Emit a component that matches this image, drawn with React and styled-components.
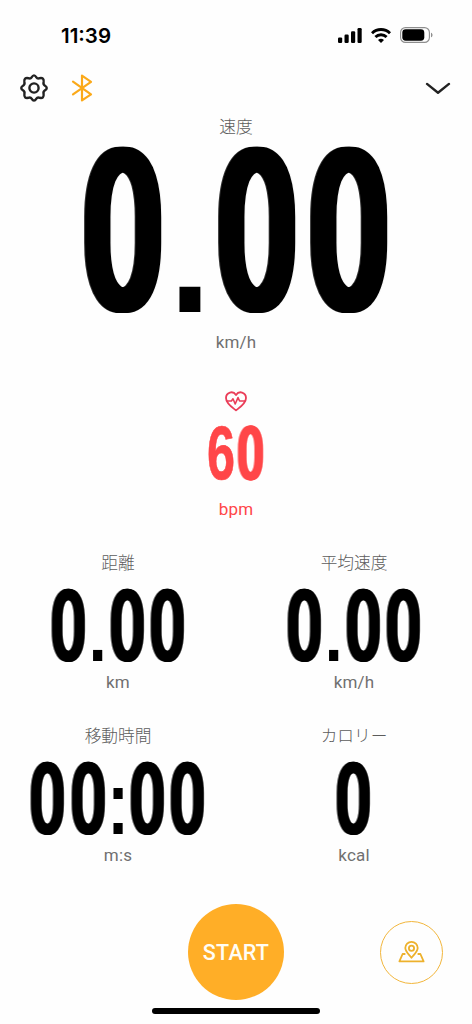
import styled, { createGlobalStyle } from 'styled-components'

const cells = [
  { label: '距離', value: '0.00', unit: 'km' },
  { label: '平均速度', value: '0.00', unit: 'km/h' },
  { label: '移動時間', value: '00:00', unit: 'm:s' },
  { label: 'カロリー', value: '0', unit: 'kcal' },
]

function Figure({ value, size, color }) {
  const glyphs = { '.': Mark, ':': Mark, 6: Six }

  return (
    <FigureRow $size={size} $color={color}>
      {value.split('').map((ch, i) => {
        const Glyph = glyphs[ch] || Digit
        return <Glyph key={i}><span>{ch}</span></Glyph>
      })}
    </FigureRow>
  )
}

function StatusBar() {
  return (
    <Status>
      <Clock>11:39</Clock>
      <StatusIcons>
        <svg width='24' height='15' viewBox='0 0 24 15'>
          <rect x='0' y='9.4' width='4.2' height='5.6' rx='1.2' />
          <rect x='6.5' y='6.5' width='4.2' height='8.5' rx='1.2' />
          <rect x='13' y='3.3' width='4.2' height='11.7' rx='1.2' />
          <rect x='19.5' y='0' width='4.2' height='15' rx='1.2' />
        </svg>
        <svg width='20' height='15' viewBox='0 0 20 15' fill='none' stroke='#000' strokeWidth='2.9'>
          <path d='M1 5.2a12.8 12.8 0 0 1 18 0' />
          <path d='M4.4 9a8 8 0 0 1 11.2 0' />
          <path d='M10 15 7 12.1a4.4 4.4 0 0 1 6 0z' fill='#000' stroke='none' />
        </svg>
        <svg width='33' height='16' viewBox='0 0 33 16'>
          <rect x='.6' y='.6' width='28.8' height='14.8' rx='4.8' fill='none' stroke='#8e8e8e' strokeWidth='1.1' />
          <rect x='2.3' y='2.3' width='22' height='11.4' rx='3.4' />
          <path d='M31 5.7c2 .7 2 3.9 0 4.6z' fill='#8e8e8e' />
        </svg>
      </StatusIcons>
    </Status>
  )
}

function App() {
  return (
    <Screen>
      <GlobalStyle />
      <StatusBar />
      <Toolbar>
        <IconButton aria-label='settings'>
          <svg width='30' height='30' viewBox='0 0 30 30' fill='none' stroke='#222' strokeWidth='2.4' strokeLinejoin='round'>
            <path d='M12.6 4.3Q15 .4 17.4 4.3Q18.4 6 20.6 5.2Q25.2 4.3 24.6 9Q24 11.2 25.7 12.4Q29.8 15 25.7 17.6Q24 18.8 24.6 21Q25.2 25.7 20.6 24.8Q18.4 24 17.4 25.7Q15 29.6 12.6 25.7Q11.6 24 9.4 24.8Q4.8 25.7 5.4 21Q6 18.8 4.3 17.6Q.2 15 4.3 12.4Q6 11.2 5.4 9Q4.8 4.3 9.4 5.2Q11.6 6 12.6 4.3Z' />
            <circle cx='15' cy='15' r='4.6' />
          </svg>
        </IconButton>
        <IconButton aria-label='bluetooth'>
          <svg width='22' height='28' viewBox='0 0 22 28' fill='none' stroke='#fba919' strokeWidth='2.2' strokeLinejoin='round' strokeLinecap='round'>
            <path d='M2 7.6 20 20.3 11 26.4V1.6L20 7.8 2 20.4' />
          </svg>
        </IconButton>
        <Spacer />
        <IconButton aria-label='close'>
          <svg width='26' height='14' viewBox='0 0 26 14' fill='none' stroke='#222' strokeWidth='2.4' strokeLinecap='round' strokeLinejoin='round'>
            <path d='M2 2.9 13 11.7 24 2.9' />
          </svg>
        </IconButton>
      </Toolbar>

      <Speed>
        <Label>速度</Label>
        <Figure value='0.00' size={203} />
        <Unit>km/h</Unit>
      </Speed>

      <HeartRate>
        <svg width='22' height='21' viewBox='0 0 22 21' fill='none' stroke='#ea3d58' strokeWidth='1.8' strokeLinejoin='round'>
          <path d='M11 19.4C7.5 16.6 1 12.6 1 7C1 1.2 8-.8 11 4C14-.8 21 1.2 21 7C21 12.6 14.5 16.6 11 19.4Z' />
          <path d='M1.6 10H6.4L8 7.8 10.2 13 13 6.6 14.6 10H20.4' strokeWidth='1.6' />
        </svg>
        <Figure value='60' size={66} color='#ff4648' />
        <Unit $color='#ff4648'>bpm</Unit>
      </HeartRate>

      <Grid>
        {cells.map((c) => (
          <Cell key={c.label}>
            <Label>{c.label}</Label>
            <Figure value={c.value} size={89.3} />
            <Unit>{c.unit}</Unit>
          </Cell>
        ))}
      </Grid>

      <Footer>
        <StartButton>START</StartButton>
        <MapButton aria-label='map'>
          <svg width='27' height='22' viewBox='0 0 27 22' fill='none' stroke='#edb12c' strokeWidth='1.8' strokeLinejoin='round'>
            <path d='M13.5 16.8C11 13.6 7.3 10.6 7.3 7.1a6.2 6.2 0 0 1 12.4 0C19.7 10.6 16 13.6 13.5 16.8Z' />
            <circle cx='13.5' cy='7.2' r='2.6' />
            <path d='M7.4 13H4.6L1.4 20.4H25.6L22.4 13H19.6' />
          </svg>
        </MapButton>
      </Footer>
      <HomeBar />
    </Screen>
  )
}

const GlobalStyle = createGlobalStyle`
  * { box-sizing: border-box; }
  body {
    margin: 0;
    background: #fff;
  }
  svg { display: block; }
`

const Screen = styled.div`
  display: flex;
  flex-direction: column;
  width: 472px;
  height: 1024px;
  overflow: hidden;
  background: #fefefe;
  font-family: Roboto, 'Noto Sans CJK JP', sans-serif;
`

const Status = styled.div`
  display: flex;
  align-items: center;
  justify-content: space-between;
  height: 70px;
  padding: 0 39px 0 61px;
`

const Clock = styled.div`
  padding-top: 1px;
  font-family: Inter, sans-serif;
  font-size: 20.5px;
  font-weight: 600;
  color: #000;
`

const StatusIcons = styled.div`
  display: flex;
  align-items: center;
  gap: 9px;
`

const Toolbar = styled.div`
  display: flex;
  align-items: center;
  height: 36px;
  padding: 0 21px 0 19px;
`

const IconButton = styled.button`
  padding: 0;
  border: 0;
  background: none;
  & + & {
    margin-left: 22px;
  }
`

const Spacer = styled.div`
  flex: 1;
`

const Label = styled.div`
  height: 22px;
  line-height: 22px;
  font-family: 'Noto Sans CJK JP', sans-serif;
  font-size: 16.7px;
  font-weight: 300;
  color: #5c5c5c;
`

const Unit = styled.div`
  height: 22px;
  line-height: 22px;
  font-size: 17px;
  letter-spacing: 0.2px;
  color: ${(p) => p.$color || '#707070'};
`

const FigureRow = styled.div`
  display: flex;
  height: 0.818em;
  font-size: ${(p) => p.$size}px;
  color: ${(p) => p.$color || '#000'};
`

/* light condensed zero, thickened by a stroke and widened sideways so the sides stay straight */
const Digit = styled.span`
  display: flex;
  justify-content: center;
  width: 0.453em;
  line-height: 0.846em;
  font-family: 'Roboto Condensed', Roboto, sans-serif;
  font-weight: 200;
  -webkit-text-stroke: 0.089em currentColor;
  span {
    transform: scaleX(0.76);
    filter: drop-shadow(0.02em 0 0 currentColor) drop-shadow(-0.02em 0 0 currentColor);
  }
`

const Six = styled.span`
  display: flex;
  justify-content: center;
  width: 0.44em;
  line-height: 0.816em;
  font-family: 'Liberation Sans', sans-serif;
  font-weight: 700;
  -webkit-text-stroke: 0.01em currentColor;
  span {
    font-size: 1.14em;
    transform: scaleX(0.67);
  }
`

const Mark = styled.span`
  display: flex;
  justify-content: center;
  width: 0.21em;
  line-height: 0.926em;
  font-family: 'DejaVu Sans', sans-serif;
`

const Speed = styled.section`
  display: flex;
  flex-direction: column;
  align-items: center;
  padding-top: 9px;
  ${FigureRow} {
    margin-top: 11px;
  }
  ${Unit} {
    margin-top: 17px;
  }
`

const HeartRate = styled.section`
  display: flex;
  flex-direction: column;
  align-items: center;
  margin-top: 38px;
  ${FigureRow} {
    margin-top: 15px;
  }
  ${Unit} {
    margin-top: 17px;
  }
`

const Grid = styled.section`
  display: grid;
  grid-template-columns: 1fr 1fr;
  grid-auto-rows: 173px;
  margin-top: 31px;
`

const Cell = styled.div`
  display: flex;
  flex-direction: column;
  align-items: center;
  ${FigureRow} {
    margin-top: 16px;
  }
  ${Unit} {
    margin-top: 9px;
  }
`

const Footer = styled.footer`
  display: grid;
  grid-template-columns: 1fr 96px 1fr;
  align-items: center;
  height: 96px;
  margin-top: 7px;
`

const StartButton = styled.button`
  grid-column: 2;
  height: 96px;
  padding: 0;
  border: 0;
  border-radius: 50%;
  background: #ffae27;
  color: #fffdf5;
  font-family: Roboto, sans-serif;
  font-size: 21.5px;
  font-weight: 500;
  letter-spacing: 0.2px;
`

const MapButton = styled.button`
  display: flex;
  align-items: center;
  justify-content: center;
  justify-self: end;
  width: 63px;
  height: 63px;
  margin-right: 29px;
  padding: 0;
  border: 1.5px solid #f2b63c;
  border-radius: 50%;
  background: none;
`

const HomeBar = styled.div`
  align-self: center;
  width: 168px;
  height: 6px;
  margin-top: 8px;
  border-radius: 3px;
  background: #000;
`

export default App
